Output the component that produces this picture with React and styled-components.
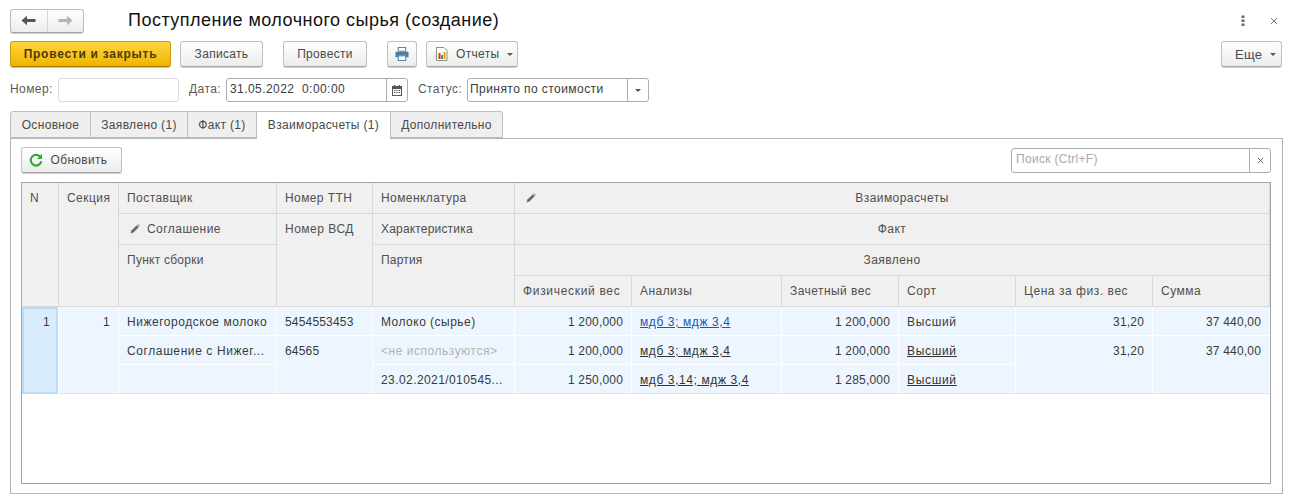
import React from "react";
import styled, { createGlobalStyle, css } from "styled-components";

const Global = createGlobalStyle`
  html, body { margin: 0; padding: 0; background: #fff; }
  body { font-family: "Liberation Sans", Arial, sans-serif; font-size: 12px; color: #4a4a4a; }
  * { box-sizing: border-box; }
`;

const Page = styled.div`
  width: 1293px;
  height: 501px;
  padding: 8px 10px 0;
  overflow: hidden;
`;
const Header = styled.header`
  display: flex;
  align-items: center;
  height: 25px;
`;
const NavGroup = styled.div`
  display: flex;
  width: 74px;
  height: 24px;
  border: 1px solid #bcbcbc;
  border-bottom-color: #a5a5a5;
  border-radius: 3px;
  background: linear-gradient(#fff, #ececec);
  box-shadow: 0 1px 0 #cfcfcf;
`;
const NavButton = styled.button`
  flex: 1;
  display: flex;
  align-items: center;
  justify-content: center;
  padding: 0;
  background: none;
  border: 0;
  & + & { border-left: 1px solid #d6d6d6; }
`;
const Title = styled.h1`
  margin: 0 0 0 44px;
  font-size: 18px;
  font-weight: 400;
  color: #111;
  letter-spacing: 0.48px;
`;
const WindowTools = styled.div`
  margin-left: auto;
  display: flex;
  align-items: center;
  gap: 25px;
  padding-right: 5px;
`;
const Toolbar = styled.div`
  display: flex;
  margin-top: 8px;
  height: 26px;
  padding-right: 1px;
`;
const Button = styled.button`
  display: inline-flex;
  align-items: center;
  justify-content: ${(p) => (p.$pl ? "flex-start" : "center")};
  gap: ${(p) => p.$gap || 0}px;
  width: ${(p) => p.$w}px;
  margin-left: ${(p) => p.$ml || 0}px;
  height: 26px;
  padding: 0 ${(p) => p.$pr || 0}px 0 ${(p) => p.$pl || 0}px;
  font: ${(p) => p.$fs || 12}px "Liberation Sans", Arial, sans-serif;
  letter-spacing: 0.32px;
  color: #4a4a4a;
  border: 1px solid #c0c0c0;
  border-bottom-color: #a8a8a8;
  border-radius: 3px;
  background: linear-gradient(#fff, #ececec);
  box-shadow: 0 1px 0 #d0d0d0;
  ${(p) => p.$right && css`margin-left: auto;`}
`;
const PrimaryButton = styled(Button)`
  font-weight: 700;
  letter-spacing: 0.74px;
  color: #4c3b0a;
  border-color: #c89b10;
  border-bottom-color: #a47c00;
  background: linear-gradient(#ffd640, #f0b400);
  box-shadow: 0 1px 0 #d8c788;
`;
const Caret = styled.span`
  width: 0;
  height: 0;
  border-left: 3px solid transparent;
  border-right: 3px solid transparent;
  border-top: 3px solid #555;
  margin-top: 1px;
`;
const FieldRow = styled.div`
  display: flex;
  align-items: center;
  margin-top: 11px;
  height: 24px;
`;
const Label = styled.label`
  margin-left: ${(p) => p.$ml || 0}px;
  width: ${(p) => p.$w}px;
  padding-bottom: 2px;
  color: #5a5a5a;
  letter-spacing: 0.42px;
`;
const Field = styled.div`
  display: flex;
  width: ${(p) => p.$w}px;
  height: 24px;
  border: 1px solid ${(p) => (p.$muted ? "#dcdcdc" : "#adadad")};
  border-radius: 3px;
  background: #fff;
`;
const FieldText = styled.span`
  flex: 1;
  padding-left: ${(p) => p.$pad || 2}px;
  line-height: 20px;
  color: ${(p) => (p.$placeholder ? "#a9a9a9" : "#3c3c3c")};
  letter-spacing: ${(p) => p.$ls || 0.44}px;
  white-space: pre;
`;
const FieldAction = styled.span`
  width: ${(p) => p.$w}px;
  border-left: 1px solid #adadad;
  display: flex;
  align-items: center;
  justify-content: center;
`;
const Tabs = styled.div`
  display: flex;
  margin-top: 9px;
  height: 28px;
  position: relative;
  z-index: 1;
`;
const Tab = styled.div`
  width: ${(p) => p.$w}px;
  height: ${(p) => (p.$active ? 28 : 27)}px;
  line-height: 26px;
  text-align: center;
  letter-spacing: 0.33px;
  color: #4a4a4a;
  border: 1px solid #bdbdbd;
  border-left-width: ${(p) => (p.$first ? 1 : 0)}px;
  border-bottom: ${(p) => (p.$active ? "0" : "1px solid #bdbdbd")};
  border-radius: ${(p) => (p.$first ? "3px 0 0 0" : p.$last ? "0 3px 0 0" : "0")};
  background: ${(p) => (p.$active ? "#fff" : "#efefef")};
`;
const Panel = styled.section`
  margin-top: -1px;
  width: 1273px;
  height: 356px;
  padding: 8px 11px 9px 10px;
  border: 1px solid #b6b6b6;
`;
const PanelBar = styled.div`
  display: flex;
  align-items: center;
  height: 26px;
  margin-bottom: 9px;
`;
const Search = styled(Field)`
  margin-left: auto;
  height: 25px;
  margin-top: 1px;
`;
const Table = styled.div`
  display: grid;
  grid-template-columns: 37px 60px 158px 96px 142px 117px 150px 117px 117px 137px 117px;
  grid-template-rows: repeat(4, 31px) repeat(3, 29px);
  width: 1250px;
  height: 302px;
  border: 1px solid #a3a3a3;
  align-content: start;
`;
const Cell = styled.div`
  grid-column: ${(p) => p.$c} / span ${(p) => p.$cs || 1};
  grid-row: ${(p) => p.$r} / span ${(p) => p.$rs || 1};
  min-width: 0;
  padding: 8px 8px 0;
  white-space: nowrap;
  overflow: hidden;
  line-height: 15px;
  letter-spacing: ${(p) => (p.$ls === undefined ? 0.45 : p.$ls)}px;
  text-align: ${(p) => p.$align || "left"};
`;
const HeadCell = styled(Cell)`
  background: #f0f0f0;
  color: #4f4f4f;
  border-right: 1px solid #d8d8d8;
  border-bottom: 1px solid #d8d8d8;
  position: relative;
`;
const TitleHeadCell = styled(HeadCell)`
  padding-left: 28px;
`;
const BodyCell = styled(Cell)`
  background: #edf6fe;
  color: #3a3a3a;
  padding-top: 8px;
  border-right: 1px solid #fff;
  border-bottom: 1px solid ${(p) => (p.$end ? "#e4e4e4" : "#fff")};
`;
const RowNumber = styled(BodyCell)`
  background: #d9ecfc;
  border: 2px solid #b9dcf8;
  margin-right: 1px;
  padding: 6px 6px 0;
`;
const Link = styled.a`
  color: ${(p) => (p.$blue ? "#1b55b3" : "#333")};
  text-decoration: underline;
`;
const Muted = styled.span`
  color: #b3b3b3;
`;
const PencilSlot = styled.span`
  display: inline-flex;
  margin: 0 7px 0 3px;
  vertical-align: -1px;
`;
const ColumnEdit = styled.span`
  position: absolute;
  left: 11px;
  top: 10px;
  display: flex;
`;

const Arrow = ({ left, color }) => (
  <svg width="15" height="11" viewBox="0 0 15 11">
    <path
      d={left ? "M0.5 5.5 L6 0.8 V4 H14.5 V7 H6 V10.2 Z" : "M14.5 5.5 L9 0.8 V4 H0.5 V7 H9 V10.2 Z"}
      fill={color}
    />
  </svg>
);
const Kebab = () => (
  <svg width="4" height="12" viewBox="0 0 4 12" fill="#666">
    <rect x="0.5" y="0.5" width="3" height="2.4" />
    <rect x="0.5" y="4.5" width="3" height="2.4" />
    <rect x="0.5" y="8.5" width="3" height="2.4" />
  </svg>
);
const Cross = ({ size = 8, color = "#777" }) => (
  <svg width={size} height={size} viewBox="0 0 8 8">
    <path d="M1 1 L7 7 M7 1 L1 7" stroke={color} strokeWidth="1" fill="none" />
  </svg>
);
const Printer = () => (
  <svg width="14" height="14" viewBox="0 0 15 15">
    <rect x="3.5" y="0.5" width="8" height="4" fill="#fff" stroke="#4d7c9c" />
    <path d="M1 5 H14 a1 1 0 0 1 .5 1 V11 H11.5 V9 H3.5 V11 H.5 V6 a1 1 0 0 1 .5-1Z" fill="#4d7c9c" />
    <rect x="3.5" y="9.5" width="8" height="5" fill="#fff" stroke="#4d7c9c" />
  </svg>
);
const Report = () => (
  <svg width="13" height="14" viewBox="0 0 13 14">
    <path d="M1.5 .5 H9 L12 3.5 V13.5 H1.5 Z" fill="#fff" stroke="#8e8e8e" />
    <rect x="3.5" y="6" width="2" height="6" fill="#d8352a" />
    <rect x="6" y="8" width="2" height="4" fill="#3ea33a" />
    <rect x="8.5" y="5" width="2" height="7" fill="#e0a400" />
  </svg>
);
const Calendar = () => (
  <svg width="10" height="11" viewBox="0 0 10 11">
    <rect x="0.5" y="1.5" width="9" height="9" fill="#fff" stroke="#555" />
    <rect x="0.5" y="1.5" width="9" height="2.5" fill="#555" />
    <rect x="2" y="0" width="1.2" height="2" fill="#555" />
    <rect x="6.8" y="0" width="1.2" height="2" fill="#555" />
    <path d="M2 5.5h1.4M4.3 5.5h1.4M6.6 5.5h1.4M2 7.5h1.4M4.3 7.5h1.4M6.6 7.5h1.4" stroke="#555" />
  </svg>
);
const Refresh = () => (
  <svg width="14" height="14" viewBox="0 0 14 14">
    <path d="M11.6 4.4 A5.3 5.3 0 1 0 12.3 8.2" fill="none" stroke="#35a83a" strokeWidth="2.2" />
    <path d="M13 0.8 V6 H8 Z" fill="#35a83a" />
  </svg>
);
const Pencil = () => (
  <svg width="10" height="10" viewBox="0 0 10 10">
    <path d="M0.6 9.4 L1.4 6.6 L6.8 1.2 L8.8 3.2 L3.4 8.6 Z" fill="#6a6a6a" />
    <path d="M7.4 0.7 L8 0.2 L9.8 2 L9.3 2.6 Z" fill="#6a6a6a" />
  </svg>
);

const NUM = 0.18;
const measures = [
  { r: 5, a: "1 200,000", b: "мдб 3; мдж 3,4", c: "1 200,000", d: "Высший", blue: true },
  { r: 6, a: "1 200,000", b: "мдб 3; мдж 3,4", c: "1 200,000", d: "Высший", sortLink: true },
  { r: 7, a: "1 250,000", b: "мдб 3,14; мдж 3,4", c: "1 285,000", d: "Высший", sortLink: true, end: true },
];

export default function App() {
  return (
    <Page>
      <Global />
      <Header>
        <NavGroup>
          <NavButton><Arrow left color="#555" /></NavButton>
          <NavButton><Arrow color="#b5b5b5" /></NavButton>
        </NavGroup>
        <Title>Поступление молочного сырья (создание)</Title>
        <WindowTools>
          <Kebab />
          <Cross />
        </WindowTools>
      </Header>
      <Toolbar>
        <PrimaryButton $w={161}>Провести и закрыть</PrimaryButton>
        <Button $w={83} $ml={9}>Записать</Button>
        <Button $w={84} $ml={20}>Провести</Button>
        <Button $w={30} $ml={20}><Printer /></Button>
        <Button $w={92} $ml={9} $gap={8} $pl={8}><Report />Отчеты<Caret /></Button>
        <Button $w={61} $right $gap={8} $fs={13} $pl={13}>Еще<Caret /></Button>
      </Toolbar>
      <FieldRow>
        <Label $w={48}>Номер:</Label>
        <Field $w={121} $muted />
        <Label $w={37} $ml={10}>Дата:</Label>
        <Field $w={182}>
          <FieldText $pad={3}>31.05.2022  0:00:00</FieldText>
          <FieldAction $w={21}><Calendar /></FieldAction>
        </Field>
        <Label $w={49} $ml={10}>Статус:</Label>
        <Field $w={182}>
          <FieldText>Принято по стоимости</FieldText>
          <FieldAction $w={21}><Caret /></FieldAction>
        </Field>
      </FieldRow>
      <Tabs>
        <Tab $w={81} $first>Основное</Tab>
        <Tab $w={97}>Заявлено (1)</Tab>
        <Tab $w={69}>Факт (1)</Tab>
        <Tab $w={134} $active>Взаиморасчеты (1)</Tab>
        <Tab $w={112} $last>Дополнительно</Tab>
      </Tabs>
      <Panel>
        <PanelBar>
          <Button $w={101} $gap={8} $pr={7}><Refresh />Обновить</Button>
          <Search $w={260}>
            <FieldText $placeholder $pad={4} $ls={0.3}>Поиск (Ctrl+F)</FieldText>
            <FieldAction $w={21}><Cross size={7} color="#555" /></FieldAction>
          </Search>
        </PanelBar>
        <Table>
          <HeadCell $c={1} $r={1} $rs={4}>N</HeadCell>
          <HeadCell $c={2} $r={1} $rs={4}>Секция</HeadCell>
          <HeadCell $c={3} $r={1}>Поставщик</HeadCell>
          <HeadCell $c={3} $r={2}><PencilSlot><Pencil /></PencilSlot>Соглашение</HeadCell>
          <HeadCell $c={3} $r={3} $rs={2} $ls={0.25}>Пункт сборки</HeadCell>
          <HeadCell $c={4} $r={1} $ls={0.4}>Номер ТТН</HeadCell>
          <HeadCell $c={4} $r={2} $rs={3} $ls={0.5}>Номер ВСД</HeadCell>
          <HeadCell $c={5} $r={1} $ls={0.42}>Номенклатура</HeadCell>
          <HeadCell $c={5} $r={2} $ls={0.18}>Характеристика</HeadCell>
          <HeadCell $c={5} $r={3} $rs={2} $ls={0.18}>Партия</HeadCell>
          <TitleHeadCell $c={6} $cs={6} $r={1} $align="center">
            <ColumnEdit><Pencil /></ColumnEdit>Взаиморасчеты
          </TitleHeadCell>
          <HeadCell $c={6} $cs={6} $r={2} $align="center">Факт</HeadCell>
          <HeadCell $c={6} $cs={6} $r={3} $align="center">Заявлено</HeadCell>
          <HeadCell $c={6} $r={4} $ls={0.68}>Физический вес</HeadCell>
          <HeadCell $c={7} $r={4}>Анализы</HeadCell>
          <HeadCell $c={8} $r={4}>Зачетный вес</HeadCell>
          <HeadCell $c={9} $r={4} $ls={0.6}>Сорт</HeadCell>
          <HeadCell $c={10} $r={4} $ls={0.55}>Цена за физ. вес</HeadCell>
          <HeadCell $c={11} $r={4} $ls={0.5}>Сумма</HeadCell>

          <RowNumber $c={1} $r={5} $rs={3} $align="right">1</RowNumber>
          <BodyCell $c={2} $r={5} $rs={3} $align="right" $end>1</BodyCell>
          <BodyCell $c={3} $r={5} $ls={0.53}>Нижегородское молоко</BodyCell>
          <BodyCell $c={3} $r={6} $ls={0.6}>Соглашение с Нижег...</BodyCell>
          <BodyCell $c={3} $r={7} $end />
          <BodyCell $c={4} $r={5} $ls={NUM}>5454553453</BodyCell>
          <BodyCell $c={4} $r={6} $rs={2} $end $ls={NUM}>64565</BodyCell>
          <BodyCell $c={5} $r={5} $ls={0.48}>Молоко (сырье)</BodyCell>
          <BodyCell $c={5} $r={6} $ls={0.53}><Muted>&lt;не используются&gt;</Muted></BodyCell>
          <BodyCell $c={5} $r={7} $end $ls={0.42}>23.02.2021/010545...</BodyCell>
          {measures.map((m) => (
            <React.Fragment key={m.r}>
              <BodyCell $c={6} $r={m.r} $align="right" $end={m.end} $ls={NUM}>{m.a}</BodyCell>
              <BodyCell $c={7} $r={m.r} $end={m.end} $ls={0.6}><Link $blue={m.blue}>{m.b}</Link></BodyCell>
              <BodyCell $c={8} $r={m.r} $align="right" $end={m.end} $ls={NUM}>{m.c}</BodyCell>
              <BodyCell $c={9} $r={m.r} $end={m.end} $ls={0.68}>
                {m.sortLink ? <Link>{m.d}</Link> : m.d}
              </BodyCell>
            </React.Fragment>
          ))}
          <BodyCell $c={10} $r={5} $align="right" $ls={NUM}>31,20</BodyCell>
          <BodyCell $c={11} $r={5} $align="right" $ls={NUM}>37 440,00</BodyCell>
          <BodyCell $c={10} $r={6} $rs={2} $align="right" $end $ls={NUM}>31,20</BodyCell>
          <BodyCell $c={11} $r={6} $rs={2} $align="right" $end $ls={NUM}>37 440,00</BodyCell>
        </Table>
      </Panel>
    </Page>
  );
}
